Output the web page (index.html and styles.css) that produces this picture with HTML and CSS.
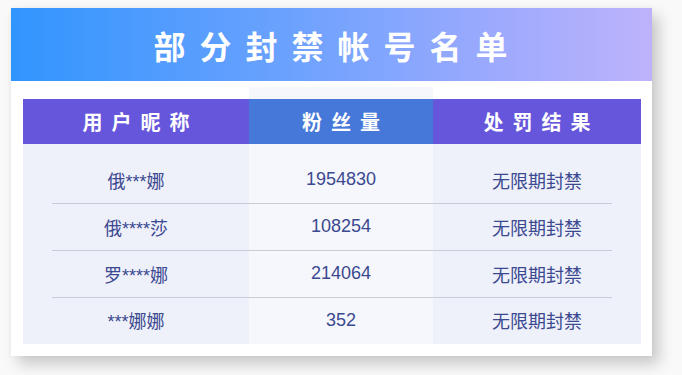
FILE: index.html
```html
<!DOCTYPE html>
<html lang="zh">
<head>
<meta charset="utf-8">
<link rel="stylesheet" href="styles.css">
</head>
<body>
<div class="card">
  <div class="banner"><h1 class="title">部分封禁帐号名单</h1></div>
  <div class="table">
    <div class="cap"><span></span><span class="mid"></span><span></span></div>
    <div class="thead">
      <div class="th">用户昵称</div>
      <div class="th mid">粉丝量</div>
      <div class="th">处罚结果</div>
    </div>
    <div class="tbody">
      <div class="row"><div class="td">俄***娜</div><div class="td">1954830</div><div class="td">无限期封禁</div></div>
      <div class="row"><div class="td">俄****莎</div><div class="td">108254</div><div class="td">无限期封禁</div></div>
      <div class="row"><div class="td">罗****娜</div><div class="td">214064</div><div class="td">无限期封禁</div></div>
      <div class="row last"><div class="td">***娜娜</div><div class="td">352</div><div class="td">无限期封禁</div></div>
    </div>
  </div>
</div>
</body>
</html>
```

FILE: styles.css
```css
html, body {
  margin: 0;
  padding: 0;
  background: #f9f9fa;
}
body {
  padding: 8px 0 0 11px;
  height: 375px;
  box-sizing: border-box;
  font-family: "Liberation Sans", "Noto Sans CJK SC", sans-serif;
}
.card {
  width: 641px;
  height: 348px;
  background: #ffffff;
  box-shadow: 7px 8px 14px rgba(0, 0, 0, 0.2), 0 0 4px rgba(0, 0, 0, 0.04);
  display: flex;
  flex-direction: column;
}
.banner {
  height: 73px;
  background: linear-gradient(90deg, #3195fe 0%, #6ea2fe 45%, #a3abfd 80%, #bdb3fb 100%);
  display: flex;
  align-items: center;
  justify-content: center;
}
.title {
  margin: 0;
  color: #ffffff;
  font-family: "Noto Sans CJK SC", sans-serif;
  font-weight: 700;
  font-size: 32px;
  letter-spacing: 14px;
  padding-left: 12px;
  line-height: 1;
}
.table {
  margin: 6px 11px 0 12px;
  display: flex;
  flex-direction: column;
}
.cap, .thead, .row {
  display: grid;
  grid-template-columns: 226px 184px 208px;
}
.cap {
  height: 12px;
}
.cap .mid {
  background: #f6f7fc;
}
.thead {
  height: 45px;
  background: #6556db;
}
.th {
  display: flex;
  align-items: center;
  justify-content: center;
  color: #ffffff;
  font-family: "Noto Sans CJK SC", sans-serif;
  font-weight: 700;
  font-size: 20px;
  letter-spacing: 9px;
  padding-left: 9px;
}
.th.mid {
  background: #4578d8;
}
.tbody {
  padding-top: 13px;
  background: linear-gradient(90deg, #eef0fa 0, #eef0fa 226px, #f6f7fc 226px, #f6f7fc 410px, #eef0fa 410px, #eef0fa 100%);
}
.row {
  height: 47px;
  box-sizing: border-box;
  background-image: linear-gradient(#c9cbd6, #c9cbd6);
  background-size: calc(100% - 58px) 1px;
  background-position: center bottom;
  background-repeat: no-repeat;
}
.row.last {
  height: 46px;
  background-image: none;
}
.td {
  display: flex;
  align-items: center;
  justify-content: center;
  color: #3b4990;
  font-size: 18px;
  font-weight: 400;
  padding-bottom: 2px;
}
```
